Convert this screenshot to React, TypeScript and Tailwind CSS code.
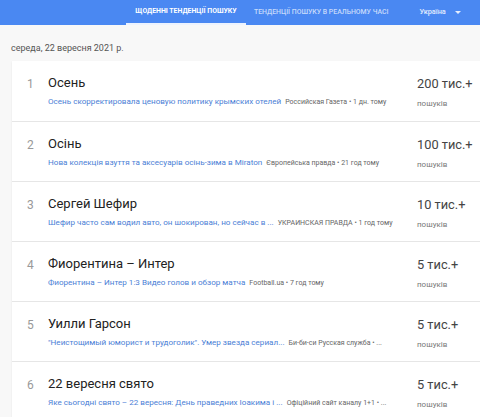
import React from 'react';

const trends = [
  { n: 1, title: 'Осень', link: 'Осень скорректировала ценовую политику крымских отелей', source: 'Российская Газета • 1 дн. тому', count: '200 тис.+' },
  { n: 2, title: 'Осінь', link: 'Нова колекція взуття та аксесуарів осінь-зима в Miraton', source: 'Європейська правда • 21 год тому', count: '100 тис.+' },
  { n: 3, title: 'Сергей Шефир', link: 'Шефир часто сам водил авто, он шокирован, но сейчас в ...', source: 'УКРАИНСКАЯ ПРАВДА • 1 год тому', count: '10 тис.+' },
  { n: 4, title: 'Фиорентина – Интер', link: 'Фиорентина – Интер 1:3 Видео голов и обзор матча', source: 'Football.ua • 7 год тому', count: '5 тис.+' },
  { n: 5, title: 'Уилли Гарсон', link: '"Неистощимый юморист и трудоголик". Умер звезда сериал...', source: 'Би-би-си Русская служба • ...', count: '5 тис.+' },
  { n: 6, title: '22 вересня свято', link: 'Яке сьогодні свято – 22 вересня: День праведних Іоакима і ...', source: 'Офіційний сайт каналу 1+1 • ...', count: '5 тис.+' },
];

const App = () => {
  return (
    <div className="w-[480px] h-[417px] overflow-hidden bg-[#f8f8f8] font-['Roboto',sans-serif]">
      <div className="h-[25px] bg-[#4a88f2] flex items-stretch text-[6.9px]">
        <div className="ml-[126px] w-[120px] flex items-center justify-center font-bold text-white border-b-2 border-white/90">
          ЩОДЕННІ ТЕНДЕНЦІЇ ПОШУКУ
        </div>
        <div className="ml-[8px] flex items-center font-medium text-white/70">
          ТЕНДЕНЦІЇ ПОШУКУ В РЕАЛЬНОМУ ЧАСІ
        </div>
        <div className="ml-[31px] flex items-center gap-[9px] font-medium text-white/85">
          <span className="text-[7.3px]">Україна</span>
          <span className="w-0 h-0 border-l-[3px] border-r-[3px] border-t-[3px] border-l-transparent border-r-transparent border-t-white/85" />
        </div>
      </div>

      <div className="pl-[11px] pt-[17px] h-[36px] text-[9px] text-[#555]">середа, 22 вересня 2021 р.</div>

      <div className="ml-[12px] bg-white shadow-[0_1px_2px_rgba(0,0,0,0.08)]">
        {trends.map((t, i) => (
          <div key={t.n} className={`h-[60px] flex ${i > 0 ? 'border-t border-[#e6e6e6]' : ''}`}>
            <div className="w-[36px] pl-[15px] pt-[14px] text-[12px] text-[#999]">{t.n}</div>
            <div className="flex-1 min-w-0 pt-[13px]">
              <div className="text-[13px] leading-[18px] text-[#222]">{t.title}</div>
              <div className="mt-[3px] flex items-baseline gap-[4px] whitespace-nowrap">
                <span className="text-[8.1px] text-[#4b80d6]">{t.link}</span>
                <span className="text-[7px] text-[#666]">{t.source}</span>
              </div>
            </div>
            <div className="w-[63px] pt-[15px]">
              <div className="text-[12.8px] leading-[16px] text-[#444]">{t.count}</div>
              <div className="mt-[6px] text-[8px] text-[#777]">пошуків</div>
            </div>
          </div>
        ))}
      </div>
    </div>
  );
};

export default App;
